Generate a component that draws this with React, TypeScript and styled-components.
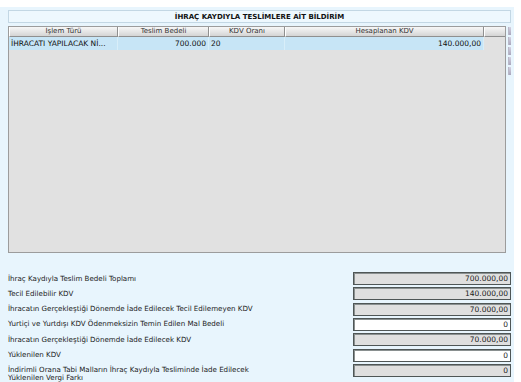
import React from "react";
import styled, { createGlobalStyle } from "styled-components";

const GlobalStyle = createGlobalStyle`
    html, body {
        margin: 0;
        padding: 0;
        background: #ffffff;
        overflow: hidden;
    }
    body {
        font-family: Tahoma, "DejaVu Sans", "Liberation Sans", sans-serif;
    }
`;

interface Column {
    title: string;
    width: number;
    align: "left" | "right";
}

const columns: Column[] = [
    { title: "İşlem Türü", width: 109, align: "left" },
    { title: "Teslim Bedeli", width: 91, align: "right" },
    { title: "KDV Oranı", width: 76, align: "left" },
    { title: "Hesaplanan KDV", width: 199, align: "right" },
];

const rows = [["İHRACATI YAPILACAK Nİ...", "700.000", "20", "140.000,00"]];

interface SummaryField {
    label: React.ReactNode;
    value: string;
    editable?: boolean;
}

const fields: SummaryField[] = [
    { label: "İhraç Kaydıyla Teslim Bedeli Toplamı", value: "700.000,00" },
    { label: "Tecil Edilebilir KDV", value: "140.000,00" },
    { label: "İhracatın Gerçekleştiği Dönemde İade Edilecek Tecil Edilemeyen KDV", value: "70.000,00" },
    { label: "Yurtiçi ve Yurtdışı KDV Ödenmeksizin Temin Edilen Mal Bedeli", value: "0", editable: true },
    { label: "İhracatın Gerçekleştiği Dönemde İade Edilecek KDV", value: "70.000,00" },
    { label: "Yüklenilen KDV", value: "0", editable: true },
    {
        label: (
            <>
                İndirimli Orana Tabi Malların İhraç Kaydıyla Tesliminde İade Edilecek
                <br />
                Yüklenilen Vergi Farkı
            </>
        ),
        value: "0",
    },
];

const gridTemplate = `${columns.map((c) => `${c.width}px`).join(" ")} 1fr`;

export default function App() {
    return (
        <>
            <GlobalStyle />
            <Page>
                <Panel>
                    <TitleBar>İHRAÇ KAYDIYLA TESLİMLERE AİT BİLDİRİM</TitleBar>
                    <GridArea>
                        <Grid>
                            <HeaderRow>
                                {columns.map((c) => (
                                    <HeaderCell key={c.title}>{c.title}</HeaderCell>
                                ))}
                                <HeaderCell />
                            </HeaderRow>
                            {rows.map((r, i) => (
                                <DataRow key={i}>
                                    {r.map((v, j) => (
                                        <DataCell key={j} $align={columns[j].align}>
                                            {v}
                                        </DataCell>
                                    ))}
                                    <EmptyCell />
                                </DataRow>
                            ))}
                        </Grid>
                        <SideStrip>
                            <StripIcon />
                            <StripIcon />
                            <StripIcon />
                            <StripIcon />
                            <StripIcon />
                        </SideStrip>
                    </GridArea>
                    <Form>
                        {fields.map((f, i) => (
                            <FormRow key={i}>
                                <Label>{f.label}</Label>
                                <ValueBox $editable={!!f.editable}>{f.value}</ValueBox>
                            </FormRow>
                        ))}
                    </Form>
                </Panel>
            </Page>
        </>
    );
}

const Page = styled.div`
    width: 521px;
    height: 382px;
    padding-top: 7px;
    box-sizing: border-box;
    overflow: hidden;
`;

const Panel = styled.div`
    width: 514px;
    height: 375px;
    box-sizing: border-box;
    background: #e8f5fd;
    padding: 3px 3px 0 8px;
    display: flex;
    flex-direction: column;
`;

const TitleBar = styled.div`
    width: 503px;
    height: 13px;
    box-sizing: border-box;
    border: 1px solid #c3d7e4;
    background: #eef8fe;
    display: flex;
    align-items: center;
    justify-content: center;
    font-size: 7px;
    font-weight: 700;
    color: #111;
`;

const GridArea = styled.div`
    display: flex;
    margin-top: 3px;
    gap: 2px;
`;

const Grid = styled.div`
    width: 501px;
    height: 227px;
    box-sizing: border-box;
    border: 1px solid #9c9c9c;
    background: #e1e1e1;
`;

const HeaderRow = styled.div`
    display: grid;
    grid-template-columns: ${gridTemplate};
    height: 10px;
`;

const HeaderCell = styled.div`
    background: linear-gradient(#f7f7f7, #e6e6e6 50%, #d4d4d4);
    border-right: 1px solid #8f8f8f;
    border-left: 1px solid #ffffff;
    border-bottom: 1px solid #8f8f8f;
    font-size: 7px;
    line-height: 9px;
    color: #333;
    text-align: center;
    white-space: nowrap;
    overflow: hidden;
    &:last-child {
        border-right: none;
    }
`;

const DataRow = styled.div`
    display: grid;
    grid-template-columns: ${gridTemplate};
    height: 13px;
`;

const DataCell = styled.div<{ $align: "left" | "right" }>`
    background: #c7e5f6;
    border-right: 1px solid #d8eef9;
    padding: 0 2px;
    font-size: 7.5px;
    line-height: 13px;
    color: #111;
    text-align: ${(p) => p.$align};
    white-space: nowrap;
    overflow: hidden;
`;

const EmptyCell = styled.div`
    background: transparent;
`;

const SideStrip = styled.div`
    width: 3px;
    margin-top: 1px;
    display: flex;
    flex-direction: column;
    gap: 2px;
`;

const StripIcon = styled.div`
    height: 8px;
    background: linear-gradient(#d6d3e2, #a9a6bd);
    border-left: 1px solid #b8b8c8;
`;

const Form = styled.div`
    display: flex;
    flex-direction: column;
    gap: 2.33px;
    margin-top: 19px;
    width: 503px;
`;

const FormRow = styled.div`
    display: flex;
    justify-content: space-between;
    align-items: flex-start;
    height: 13px;
`;

const Label = styled.div`
    padding-top: 2.5px;
    font-size: 7.1px;
    line-height: 8px;
    color: #1a1a1a;
    white-space: nowrap;
`;

const ValueBox = styled.div<{ $editable: boolean }>`
    width: 158px;
    height: 13px;
    box-sizing: border-box;
    border: 1px solid #4f5656;
    box-shadow: inset 1px 1px 0 #8a9090;
    background: ${(p) => (p.$editable ? "#ffffff" : "#dfdfdf")};
    padding: 0 2px;
    font-size: 7.5px;
    line-height: 11px;
    text-align: right;
    color: #222;
`;
